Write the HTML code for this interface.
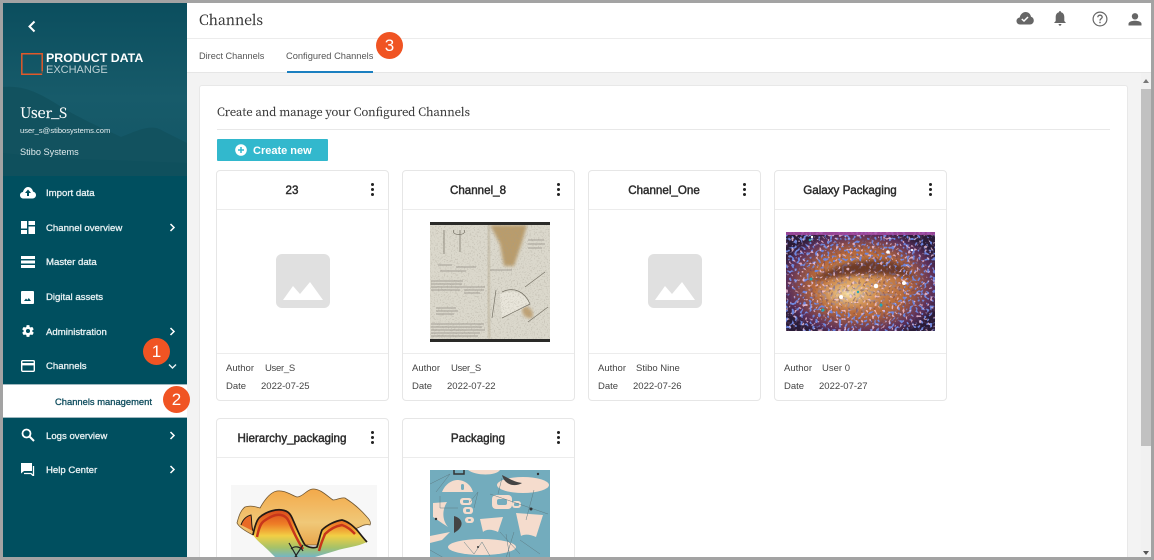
<!DOCTYPE html>
<html><head><meta charset="utf-8">
<style>
html,body{margin:0;padding:0;width:1154px;height:560px;overflow:hidden;background:#a3a3a3}
*{box-sizing:border-box}
body{font-family:"Liberation Sans","Noto Sans CJK SC",sans-serif;position:relative}
.a{position:absolute;white-space:nowrap}
#app{position:absolute;left:3px;top:3px;width:1148px;height:554px;background:#f3f3f3;overflow:hidden}
.nav{color:#e8f1f3;font-size:9.6px;left:46px;line-height:14px;-webkit-text-stroke:.3px #e8f1f3}
.serif{font-family:"Noto Serif CJK SC","Liberation Serif",serif}
.card{position:absolute;width:173px;height:231px;background:#fff;border:1px solid #e6e6e6;border-radius:4px}
.card .t{position:absolute;left:0;width:150px;top:12px;text-align:center;font-size:11.6px;color:#2b2b2b;line-height:16px;-webkit-text-stroke:.45px #2b2b2b}
.card .h{position:absolute;left:0;right:0;top:38px;height:1px;background:#ececec}
.card .f{position:absolute;left:0;right:0;top:182px;height:1px;background:#ececec}
.card .m{position:absolute;font-size:9.5px;color:#444;white-space:nowrap;line-height:12px}
.dots{position:absolute;left:154px;top:12px;width:4px;height:14px}
.dots i{display:block;width:3.4px;height:3.4px;border-radius:50%;background:#222;margin-bottom:1.5px}
.badge{position:absolute;width:27px;height:27px;border-radius:50%;background:#f05423;color:#fff;font-size:17px;line-height:27px;text-align:center}
</style></head><body>
<div id="app"></div>

<!-- Sidebar -->
<svg class="a" style="left:3px;top:3px" width="184" height="554" viewBox="0 0 184 554">
<defs><linearGradient id="sky" x1="0" y1="0" x2="0" y2="1"><stop offset="0" stop-color="#0b4e5e"/><stop offset=".55" stop-color="#175b6a"/><stop offset="1" stop-color="#125565"/></linearGradient></defs>
<rect width="184" height="554" fill="#004f5f"/>
<rect width="184" height="173" fill="url(#sky)"/>
<path d="M0 84C20 82 36 90 52 100C70 112 92 122 118 134C134 128 148 120 160 128L184 140V173H0Z" fill="#12525f"/>
<path d="M0 150L50 155L184 160V173H0Z" fill="#0f505d"/>
</svg>

<svg class="a" style="left:27px;top:20px" width="10" height="13" viewBox="0 0 10 13"><path d="M7.5 1.5L2.5 6.5L7.5 11.5" fill="none" stroke="#fff" stroke-width="2"/></svg>
<svg class="a" style="left:20px;top:52px" width="24" height="24" viewBox="0 0 24 24"><path d="M22.200 19.500V1.800H1.800V22.200H22.200M22.200 21V20.600" fill="none" stroke="#e0592a" stroke-width="1.500"/></svg>
<div class="a" style="left:46px;top:51px;color:#fff;font-size:12.4px;font-weight:700;line-height:15px">PRODUCT DATA</div>
<div class="a" style="left:46px;top:63px;color:#bcd0d4;font-size:11px;line-height:15px">EXCHANGE</div>
<div class="a serif" style="left:20px;top:103px;color:#fff;font-size:14.4px;line-height:20px;-webkit-text-stroke:.2px #fff">User_S</div>
<div class="a" style="left:20px;top:125px;color:#e8f1f3;font-size:7.55px;line-height:12px">user_s@stibosystems.com</div>
<div class="a" style="left:20px;top:146px;color:#dfeaec;font-size:9.2px;line-height:13px">Stibo Systems</div>

<div class="a nav" style="top:187px">Import data</div>
<div class="a nav" style="top:222px">Channel overview</div>
<div class="a nav" style="top:256px">Master data</div>
<div class="a nav" style="top:291px">Digital assets</div>
<div class="a nav" style="top:326px">Administration</div>
<div class="a nav" style="top:360px">Channels</div>
<div class="a" style="left:3px;top:384px;width:184px;height:34px;background:#fff;border-top:1px solid #9fb8bf;border-bottom:1px solid #9fb8bf"></div>
<div class="a" style="left:55px;top:395px;color:#0f4d5e;font-size:9.4px;line-height:14px;-webkit-text-stroke:.3px #0f4d5e">Channels management</div>
<div class="a nav" style="top:430px">Logs overview</div>
<div class="a nav" style="top:464px">Help Center</div>

<!-- nav icons -->
<svg class="a" style="left:20px;top:186px" width="16" height="13" viewBox="0 0 16 13"><path d="M3.5 12.5C1.5 12.5 0 11 0 9.2C0 7.5 1.3 6.2 2.9 6C3.6 3.4 5.7 1 8 1C10.600 1 12.500 3 13 5.600C14.700 5.800 16 7.200 16 9C16 11 14.500 12.500 12.500 12.500Z" fill="#fff"/><path d="M8 3.500L11 7H9V10H7V7H5Z" fill="#004f5f"/></svg>
<svg class="a" style="left:21px;top:221px" width="14" height="13" viewBox="0 0 14 13"><path d="M0 0H6V7.500H0ZM0 9H6V13H0ZM7.500 0H14V4H7.500ZM7.500 5.500H14V13H7.500Z" fill="#fff"/></svg>
<svg class="a" style="left:21px;top:256px" width="14" height="12" viewBox="0 0 14 12"><path d="M0 0H14V3H0ZM0 4.500H14V7.500H0ZM0 9H14V12H0Z" fill="#fff"/></svg>
<svg class="a" style="left:21px;top:291px" width="13" height="13" viewBox="0 0 13 13"><path d="M1 0H12A1 1 0 0 1 13 1V12A1 1 0 0 1 12 13H1A1 1 0 0 1 0 12V1A1 1 0 0 1 1 0Z" fill="#fff"/><path d="M3 10L5 7.500L6.300 9L7.800 7L10 10Z" fill="#004f5f"/></svg>
<svg class="a" style="left:21px;top:324px" width="14" height="14" viewBox="0 0 24 24"><path fill="#fff" d="M19.400 13c.04-.3.1-.7.1-1s-.03-.7-.1-1l2.100-1.600c.2-.15.25-.4.1-.6l-2-3.500c-.1-.2-.4-.3-.6-.2l-2.500 1c-.5-.4-1.100-.7-1.700-1L14.500 2.400C14.500 2.200 14.300 2 14 2h-4c-.25 0-.45.2-.5.4L9.100 5.100c-.6.25-1.200.6-1.700 1l-2.500-1c-.2-.1-.5 0-.6.2l-2 3.500c-.1.2-.06.45.1.6L4.500 11c-.04.3-.1.7-.1 1s.03.7.1 1l-2.100 1.600c-.2.15-.25.4-.1.6l2 3.500c.1.2.4.3.6.2l2.500-1c.5.4 1.100.7 1.700 1l.4 2.700c.05.2.25.4.5.4h4c.25 0 .45-.2.5-.4l.4-2.700c.6-.25 1.200-.6 1.700-1l2.500 1c.2.1.5 0 .6-.2l2-3.500c.1-.2.06-.45-.1-.6ZM12 15.500a3.500 3.500 0 1 1 0-7 3.500 3.500 0 0 1 0 7Z"/></svg>
<svg class="a" style="left:21px;top:360px" width="14" height="12" viewBox="0 0 14 12"><rect x=".7" y=".7" width="12.600" height="10.600" rx="1" fill="none" stroke="#fff" stroke-width="1.400"/><rect x="1" y="3" width="12" height="2.400" fill="#fff"/></svg>
<svg class="a" style="left:21px;top:428px" width="14" height="14" viewBox="0 0 14 14"><circle cx="5.500" cy="5.500" r="4" fill="none" stroke="#fff" stroke-width="1.800"/><path d="M8.500 8.500L13 13" stroke="#fff" stroke-width="2"/></svg>
<svg class="a" style="left:21px;top:463px" width="14" height="13" viewBox="0 0 14 13"><path d="M0 0H11V8H3L0 10.500Z" fill="#fff"/><path d="M12.500 3V13L10 10.500H3" fill="none" stroke="#fff" stroke-width="1.300"/></svg>

<!-- chevrons -->
<svg class="a" style="left:169px;top:223px" width="7" height="9" viewBox="0 0 7 9"><path d="M1.500 1L5 4.500L1.500 8" fill="none" stroke="#fff" stroke-width="1.500"/></svg>
<svg class="a" style="left:169px;top:327px" width="7" height="9" viewBox="0 0 7 9"><path d="M1.500 1L5 4.500L1.500 8" fill="none" stroke="#fff" stroke-width="1.500"/></svg>
<svg class="a" style="left:168px;top:363px" width="9" height="7" viewBox="0 0 9 7"><path d="M1 1.500L4.500 5L8 1.500" fill="none" stroke="#e8f1f3" stroke-width="1.400"/></svg>
<svg class="a" style="left:169px;top:431px" width="7" height="9" viewBox="0 0 7 9"><path d="M1.500 1L5 4.500L1.500 8" fill="none" stroke="#fff" stroke-width="1.500"/></svg>
<svg class="a" style="left:169px;top:465px" width="7" height="9" viewBox="0 0 7 9"><path d="M1.500 1L5 4.500L1.500 8" fill="none" stroke="#fff" stroke-width="1.500"/></svg>

<!-- Header -->
<div class="a" style="left:187px;top:3px;width:964px;height:35px;background:#fff"></div>
<div class="a" style="left:187px;top:38px;width:964px;height:1px;background:#ececec"></div>
<div class="a" style="left:187px;top:39px;width:964px;height:34px;background:#fff;border-bottom:1px solid #e6e6e6"></div>
<div class="a serif" style="left:199px;top:10px;font-size:14px;color:#333;line-height:20px;-webkit-text-stroke:.15px #333">Channels</div>
<div class="a" style="left:199px;top:50px;font-size:9.2px;color:#555;line-height:13px">Direct Channels</div>
<div class="a" style="left:286px;top:50px;font-size:9.3px;color:#555;line-height:13px">Configured Channels</div>
<div class="a" style="left:287px;top:71px;width:86px;height:2px;background:#1a7fc0"></div>

<svg class="a" style="left:1016px;top:11px" width="18" height="14" viewBox="0 0 18 14"><path d="M4 13.500C2 13.500 .5 12 .5 10C.5 8 2 6.700 3.700 6.500C4.500 3 7 1 9.500 1C12.500 1 14.500 3 15 5.800C16.700 6.200 17.800 7.800 17.800 9.500C17.800 11.800 16 13.500 14 13.500Z" fill="#666"/><path d="M5.800 8L8 10L12 6" fill="none" stroke="#fff" stroke-width="1.500"/></svg>
<svg class="a" style="left:1053px;top:11px" width="14" height="15" viewBox="0 0 14 15"><path d="M7 0C7.700 0 8 .5 8 1.200C10.300 1.800 11.300 3.700 11.300 6V10L13 12H1L2.700 10V6C2.700 3.700 3.700 1.800 6 1.200C6 .5 6.300 0 7 0ZM5.600 13H8.400C8.400 14 7.800 14.800 7 14.800C6.200 14.800 5.600 14 5.600 13Z" fill="#666"/></svg>
<svg class="a" style="left:1092px;top:11px" width="16" height="16" viewBox="0 0 16 16"><circle cx="8" cy="8" r="6.900" fill="none" stroke="#666" stroke-width="1.200"/><path d="M5.800 6.300C5.800 5 6.800 4.200 8 4.200C9.300 4.200 10.200 5 10.200 6.100C10.200 7.600 8 7.800 8 9.600" fill="none" stroke="#666" stroke-width="1.300"/><rect x="7.300" y="10.700" width="1.400" height="1.500" fill="#666"/></svg>
<svg class="a" style="left:1128px;top:13px" width="14" height="13" viewBox="0 0 14 13"><circle cx="7" cy="3.300" r="3.200" fill="#666"/><path d="M.5 12.500V10.800C.5 8.800 4 7.800 7 7.800C10 7.800 13.500 8.800 13.500 10.800V12.500Z" fill="#666"/></svg>

<!-- Scrollbar -->
<div class="a" style="left:1141px;top:73px;width:10px;height:484px;background:#f1f1f1"></div>
<div class="a" style="left:1141px;top:89px;width:10px;height:357px;background:#c1c1c1"></div>
<div class="a" style="left:1143px;top:79px;width:0;height:0;border-left:3px solid transparent;border-right:3px solid transparent;border-bottom:4px solid #777"></div>
<div class="a" style="left:1143px;top:551px;width:0;height:0;border-left:3px solid transparent;border-right:3px solid transparent;border-top:4px solid #555"></div>

<!-- Panel -->
<div class="a" style="left:199px;top:85px;width:929px;height:472px;background:#fff;border:1px solid #e8e8e8;border-bottom:0;border-radius:3px 3px 0 0"></div>
<div class="a serif" style="left:217px;top:104px;font-size:11.3px;color:#333;line-height:16px;-webkit-text-stroke:.15px #333">Create and manage your Configured Channels</div>
<div class="a" style="left:217px;top:129px;width:893px;height:1px;background:#e8e8e8"></div>
<div class="a" style="left:217px;top:139px;width:111px;height:22px;background:#32b8cd;border-radius:1px"></div>
<svg class="a" style="left:235px;top:144px" width="12" height="12" viewBox="0 0 12 12"><circle cx="6" cy="6" r="5.800" fill="#fff"/><path d="M6 3V9M3 6H9" stroke="#32b8cd" stroke-width="1.500"/></svg>
<div class="a" style="left:253px;top:144px;color:#fff;font-size:11px;font-weight:700;line-height:15px">Create new</div>

<!-- Cards -->
<div class="card" style="left:216px;top:170px"><div class="t">23</div><div class="dots" style="top:12px"><i></i><i></i><i></i></div><div class="h"></div><div class="f"></div>
<div class="m" style="left:9px;top:192px">Author</div><div class="m" style="left:48px;top:192px;letter-spacing:-.3px">User_S</div><div class="m" style="left:9px;top:210px">Date</div><div class="m" style="left:44px;top:210px">2022-07-25</div>
<svg style="position:absolute;left:59px;top:83px" width="54" height="54" viewBox="0 0 54 54"><rect width="54" height="54" rx="6" fill="#e0e0e0"/><path d="M7 46L17 32L24 40L34 28L47 46Z" fill="#fff"/></svg></div>

<div class="card" style="left:402px;top:170px"><div class="t">Channel_8</div><div class="dots"><i></i><i></i><i></i></div><div class="h"></div><div class="f"></div>
<div class="m" style="left:9px;top:192px">Author</div><div class="m" style="left:48px;top:192px;letter-spacing:-.3px">User_S</div><div class="m" style="left:9px;top:210px">Date</div><div class="m" style="left:44px;top:210px">2022-07-22</div>
<svg style="position:absolute;left:27px;top:51px" width="120" height="120" viewBox="0 0 120 120">
<defs><filter id="pn" x="0" y="0" width="100%" height="100%"><feTurbulence type="fractalNoise" baseFrequency=".7" numOctaves="2" seed="4"/><feColorMatrix values="0 0 0 0 .35 0 0 0 0 .33 0 0 0 0 .27 7 0 0 0 -3.800"/></filter><filter id="bl"><feGaussianBlur stdDeviation="1.500"/></filter></defs>
<rect width="120" height="120" fill="#dbd8cc"/>
<path d="M60 3H97L92 20L84 44H74L70 22Z" fill="#b99c6c" filter="url(#bl)"/><path d="M93 84C100 84 105 90 102 96C96 97 90 92 93 84Z" fill="#bfa274" filter="url(#bl)"/>
<path d="M58 3C60 40 56 80 60 117" stroke="#bdb39b" stroke-width="2.500" fill="none" filter="url(#bl)"/>
<g fill="none" stroke="#87837a" stroke-width=".7" opacity=".85"><path d="M1 59H33M1 62H32M1 65H33M1 68H30M33 65H55M34 68H54M34 71H50M6 86H26M6 89H28M6 92H24M1 102H54M1 105H52M1 108H55M1 111H50M1 114H48M60 48H82M98 18H114M98 22H115M98 26H112M8 43H22M26 45H46M10 49H36"/></g>
<path d="M70 72C85 66 95 72 100 82C92 88 82 92 72 96Z" fill="#e8e5da"/>
<path d="M72 70C84 64 95 70 100 82M66 68L62 96M72 96L100 82M95 65L115 50M98 100L118 85M14 8V32M30 8V30M24 8C20 14 38 14 34 8" stroke="#726e62" stroke-width=".7" fill="none"/>
<rect width="120" height="120" filter="url(#pn)" opacity=".3"/>
<rect width="120" height="3" fill="#2a2a28"/><rect y="117" width="120" height="3" fill="#2a2a28"/>
</svg></div>

<div class="card" style="left:588px;top:170px"><div class="t">Channel_One</div><div class="dots"><i></i><i></i><i></i></div><div class="h"></div><div class="f"></div>
<div class="m" style="left:9px;top:192px">Author</div><div class="m" style="left:47px;top:192px">Stibo Nine</div><div class="m" style="left:9px;top:210px">Date</div><div class="m" style="left:44px;top:210px">2022-07-26</div>
<svg style="position:absolute;left:59px;top:83px" width="54" height="54" viewBox="0 0 54 54"><rect width="54" height="54" rx="6" fill="#e0e0e0"/><path d="M7 46L17 32L24 40L34 28L47 46Z" fill="#fff"/></svg></div>

<div class="card" style="left:774px;top:170px"><div class="t">Galaxy Packaging</div><div class="dots"><i></i><i></i><i></i></div><div class="h"></div><div class="f"></div>
<div class="m" style="left:9px;top:192px">Author</div><div class="m" style="left:47px;top:192px">User 0</div><div class="m" style="left:9px;top:210px">Date</div><div class="m" style="left:44px;top:210px">2022-07-27</div>
<svg style="position:absolute;left:11px;top:61px" width="149" height="99" viewBox="0 0 149 99">
<defs>
<radialGradient id="gx" cx=".5" cy=".52" r=".58"><stop offset="0" stop-color="#e0a35c"/><stop offset=".55" stop-color="#b5683a"/><stop offset=".85" stop-color="#5c2f58"/><stop offset="1" stop-color="#2a1c38"/></radialGradient>
<radialGradient id="core" cx=".5" cy=".5" r=".5"><stop offset="0" stop-color="#f6dfa4"/><stop offset="1" stop-color="#e3a860" stop-opacity="0"/></radialGradient>
<filter id="b1" x="0" y="0" width="100%" height="100%"><feTurbulence type="fractalNoise" baseFrequency=".34" numOctaves="1" seed="9"/><feColorMatrix values="0 0 0 0 .16 0 0 0 0 .24 0 0 0 0 .72 12 0 0 0 -6.700"/></filter>
<filter id="b2" x="0" y="0" width="100%" height="100%"><feTurbulence type="fractalNoise" baseFrequency=".36" numOctaves="1" seed="21"/><feColorMatrix values="0 0 0 0 .95 0 0 0 0 .62 0 0 0 0 .78 12 0 0 0 -7.300"/></filter>
<filter id="b3" x="0" y="0" width="100%" height="100%"><feTurbulence type="fractalNoise" baseFrequency=".4" numOctaves="1" seed="33"/><feColorMatrix values="0 0 0 0 .12 0 0 0 0 .05 0 0 0 0 .12 12 0 0 0 -7"/></filter>
<mask id="edge"><rect width="149" height="99" fill="#fff"/><ellipse cx="70" cy="55" rx="48" ry="26" fill="#555"/></mask>
<filter id="s2"><feGaussianBlur stdDeviation="2"/></filter>
</defs>
<rect width="149" height="99" fill="url(#gx)"/>
<ellipse cx="62" cy="62" rx="36" ry="18" fill="url(#core)"/>
<path d="M24 50C44 34 72 26 98 28C116 30 124 38 128 46C104 42 60 40 24 50Z" fill="#6e3a28" filter="url(#s2)"/>
<rect width="149" height="99" filter="url(#b3)" opacity=".45"/>
<rect width="149" height="99" filter="url(#b1)" mask="url(#edge)"/>
<rect width="149" height="99" filter="url(#b2)" opacity=".75"/>
<rect width="149" height="3" fill="#a64aa3" opacity=".85"/>
<g fill="#fff"><circle cx="102" cy="20" r="1.800"/><circle cx="90" cy="54" r="2.300"/><circle cx="118" cy="51" r="2"/><circle cx="55" cy="65" r="2"/><circle cx="26" cy="5" r="1.200"/><circle cx="126" cy="18" r="1.100"/></g>
<g fill="#21a8b5"><circle cx="24" cy="8" r="1.300"/><circle cx="25" cy="47" r="1.500"/><circle cx="37" cy="78" r="1.500"/><circle cx="95" cy="73" r="1.500"/><circle cx="72" cy="60" r="1.200"/></g>
</svg></div>

<div class="card" style="left:216px;top:418px;height:160px"><div class="t">Hierarchy_packaging</div><div class="dots"><i></i><i></i><i></i></div><div class="h"></div>
<svg style="position:absolute;left:14px;top:66px" width="146" height="72" viewBox="0 0 146 72">
<defs><linearGradient id="bw" x1="0" y1="0" x2="0" y2="1"><stop offset="0" stop-color="#f3a94a"/><stop offset=".6" stop-color="#f0c878"/><stop offset="1" stop-color="#e9a64c"/></linearGradient>
<linearGradient id="bb" x1="0" y1="0" x2="0" y2="1"><stop offset="0" stop-color="#d94a1c"/><stop offset=".3" stop-color="#ee7d26"/><stop offset=".55" stop-color="#f2cf45"/><stop offset=".8" stop-color="#a5c268"/><stop offset="1" stop-color="#74b6c4"/></linearGradient></defs>
<rect width="146" height="72" fill="#f7f7f7"/>
<path d="M6 38C8 30 10 25 14 22C20 20 25 22 29 23C34 14 40 7 46 6C54 5 60 10 66 12C72 12 76 4 82 4C90 4 96 11 102 15C106 15 110 12 114 13C122 18 130 25 136 32C139 35 140 38 139 40C132 38 128 44 122 44L90 60L60 60L22 50C14 46 8 42 6 38Z" fill="url(#bw)" stroke="#6f5530" stroke-width=".8"/>
<path d="M22 50C24 40 26 34 29 32C36 26 46 24 51 25C58 26 60 30 62 35C66 44 70 54 74 60C78 63 84 63 86 62C88 56 89 50 91 45C96 40 104 36 111 35C118 37 122 41 126 45C130 50 133 54 136 57C126 62 116 62 104 66L84 72H44L38 66C32 60 26 56 22 50Z" fill="url(#bb)"/>
<path d="M26 52C28 42 30 38 33 36C40 31 46 29 50 30C55 31 57 34 59 39C63 48 68 58 72 64M88 66C90 58 92 54 94 49C99 44 105 41 111 40C117 42 120 45 124 49" fill="none" stroke="#c8361a" stroke-width="2.500"/>
<path d="M22 50C24 40 26 34 29 32C36 26 46 24 51 25C58 26 60 30 62 35C66 44 70 54 74 60C78 63 84 63 86 62C88 56 89 50 91 45C96 40 104 36 111 35C118 37 122 41 126 45C130 50 133 54 136 57" fill="none" stroke="#231a15" stroke-width="1.700"/>
<path d="M10 40C12 34 16 31 20 30C21 34 20 40 22 46" fill="#e86a26" stroke="#231a15" stroke-width="1"/>
<path d="M58 58L66 72M72 60L64 72M60 64C64 60 70 62 72 66" stroke="#222" stroke-width="1.200" fill="none"/>
</svg></div>

<div class="card" style="left:402px;top:418px;height:160px"><div class="t">Packaging</div><div class="dots"><i></i><i></i><i></i></div><div class="h"></div>
<svg style="position:absolute;left:27px;top:51px" width="120" height="90" viewBox="0 0 120 90">
<rect width="120" height="90" fill="#73acbd"/>
<g fill="#f5dccd">
<path d="M12 22C15 14 22 10 27 10C35 10 41 15 43 22Z"/>
<ellipse cx="93" cy="15" rx="26" ry="8"/>
<ellipse cx="52" cy="77" rx="34" ry="8"/>
<path d="M3 33L17 32C12 40 12 50 18 57C10 52 5 48 3 47Z"/>
<path d="M50 49L73 47L68 62C62 59 56 59 53 62Z"/>
<path d="M86 43L113 45L106 67C100 64 94 64 91 66Z"/>
<path d="M0 66L20 62L12 70L0 73Z"/>
<path d="M38 0H70C66 6 46 6 38 0Z"/>
<rect x="62" y="25" width="20" height="14" rx="4"/><rect x="30" y="28" width="12" height="7" rx="3"/><rect x="33" y="37" width="10" height="7" rx="3"/><rect x="35" y="47" width="9" height="6" rx="3"/><rect x="82" y="31" width="9" height="7" rx="3"/>
</g>
<g fill="#73acbd"><rect x="67" y="29" width="10" height="6" rx="2"/><rect x="33" y="30" width="6" height="3" rx="1"/><rect x="36" y="39" width="4" height="3" rx="1"/><rect x="38" y="49" width="3" height="2" rx="1"/><rect x="31" y="14" width="3" height="6" rx="1.500"/><rect x="84" y="33" width="5" height="3" rx="1"/></g>
<path d="M24 46C32 48 36 56 24 63Z" fill="#444"/>
<path d="M72 5C78 8 84 12 92 13C84 18 74 14 72 5Z" fill="#444"/>
<path d="M24 0V4H34V0" fill="none" stroke="#333" stroke-width="1.500"/>
<g fill="none" stroke="#5f7c84" stroke-width=".5"><path d="M0 14L20 4L6 22M28 38H10V26M40 32L48 22L44 38M60 24L118 44M70 62L90 84M34 72L44 84L52 72L60 86M104 20L96 50M90 70L110 84M0 80L14 88M72 8L68 24M76 64L80 88M84 62L76 88"/></g>
<g fill="#333"><circle cx="101" cy="39" r="1.500"/><circle cx="6" cy="49" r="1.200"/><circle cx="108" cy="4" r="1.200"/><circle cx="48" cy="77" r="1"/></g>
</svg></div>

<div class="a" style="left:3px;top:557px;width:1151px;height:3px;background:#a3a3a3"></div>

<!-- Badges -->
<div class="badge" style="left:143px;top:338px">1</div>
<div class="badge" style="left:163px;top:386px">2</div>
<div class="badge" style="left:376px;top:32px">3</div>
</body></html>
